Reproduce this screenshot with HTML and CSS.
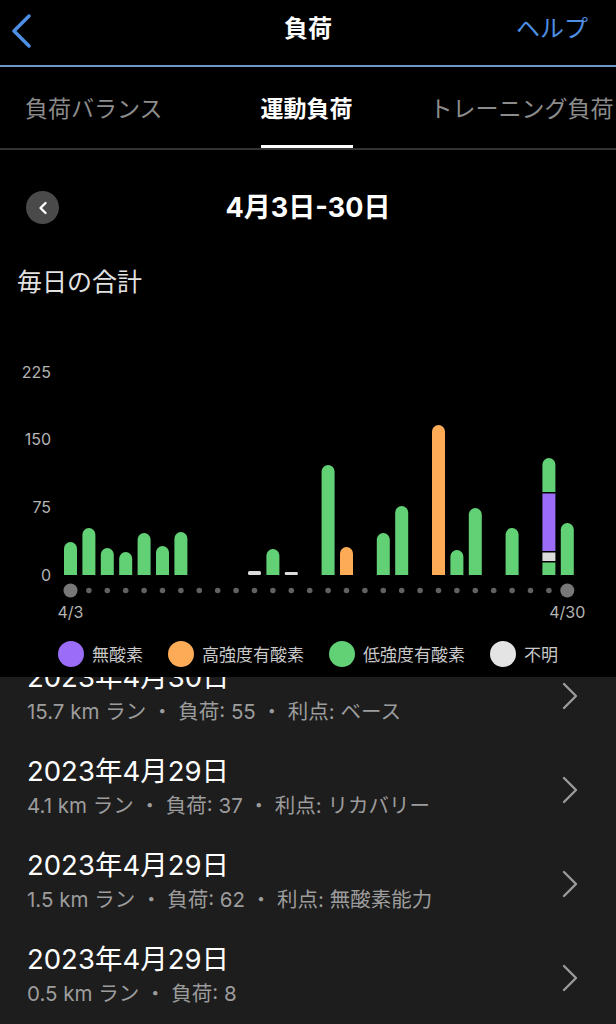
FILE: index.html
```html
<!DOCTYPE html>
<html lang="ja">
<head>
    <meta charset="utf-8">
    <title>負荷</title>
    <link rel="stylesheet" href="styles.css">
</head>
<body>
    <div class="topbar">
        <a class="back"><svg width="20" height="34" viewBox="0 0 20 34"><polyline points="17,2 2,17 17,32"/></svg></a>
        <div class="title">負荷</div>
        <a class="help">ヘルプ</a>
    </div>

    <div class="tabs">
        <span class="tab first">負荷バランス</span>
        <span class="tab second active">運動負荷</span>
        <span class="tab third">トレーニング負荷</span>
    </div>

    <div class="panel">
        <div class="range">
            <span class="prev"><svg width="10" height="14" viewBox="0 0 10 14"><polyline points="7.5,2 2.5,7 7.5,12"/></svg></span>
            <span class="range-title">4月3日-30日</span>
        </div>
        <div class="caption">毎日の合計</div>

        <svg class="chart" width="616" height="331" viewBox="0 299 616 331">
            <g class="ylabels">
                <text x="51" y="378">225</text>
                <text x="51" y="445">150</text>
                <text x="51" y="513">75</text>
                <text x="51" y="581">0</text>
            </g>
            <g class="green">
                <path d="M64 575V548.5A6.5 6.5 0 0 1 77 548.5V575Z"/>
                <path d="M82.4 575V534.5A6.5 6.5 0 0 1 95.4 534.5V575Z"/>
                <path d="M100.8 575V554.5A6.5 6.5 0 0 1 113.8 554.5V575Z"/>
                <path d="M119.2 575V558.5A6.5 6.5 0 0 1 132.2 558.5V575Z"/>
                <path d="M137.6 575V539.5A6.5 6.5 0 0 1 150.6 539.5V575Z"/>
                <path d="M156 575V552.5A6.5 6.5 0 0 1 169 552.5V575Z"/>
                <path d="M174.4 575V538.5A6.5 6.5 0 0 1 187.4 538.5V575Z"/>
                <path d="M266.4 575V555.5A6.5 6.5 0 0 1 279.4 555.5V575Z"/>
                <path d="M321.6 575V471.5A6.5 6.5 0 0 1 334.6 471.5V575Z"/>
                <path d="M376.8 575V539.5A6.5 6.5 0 0 1 389.8 539.5V575Z"/>
                <path d="M395.2 575V512.5A6.5 6.5 0 0 1 408.2 512.5V575Z"/>
                <path d="M450.4 575V556.5A6.5 6.5 0 0 1 463.4 556.5V575Z"/>
                <path d="M468.8 575V514.5A6.5 6.5 0 0 1 481.8 514.5V575Z"/>
                <path d="M505.6 575V534.5A6.5 6.5 0 0 1 518.6 534.5V575Z"/>
                <path d="M560.8 575V529.5A6.5 6.5 0 0 1 573.8 529.5V575Z"/>
                <path d="M542.4 492V464.5A6.5 6.5 0 0 1 555.4 464.5V492Z"/>
                <rect x="542.4" y="562.5" width="13" height="12.5"/>
            </g>
            <g class="orange">
                <path d="M340 575V553.5A6.5 6.5 0 0 1 353 553.5V575Z"/>
                <path d="M432 575V431.5A6.5 6.5 0 0 1 445 431.5V575Z"/>
            </g>
            <rect class="purple" x="542.4" y="493.5" width="13" height="57.5"/>
            <g class="white">
                <rect x="542.4" y="552.5" width="13" height="8.5"/>
                <rect x="248" y="571" width="13" height="4" rx="1.5"/>
                <rect x="284.8" y="572" width="13" height="3" rx="1"/>
            </g>
            <line class="dots" x1="88.9" y1="590.5" x2="548.9" y2="590.5"/>
            <circle class="end" cx="70.5" cy="590.5" r="7"/>
            <circle class="end" cx="567.3" cy="590.5" r="7"/>
            <g class="xlabels">
                <text x="70.5" y="618">4/3</text>
                <text x="567.3" y="618">4/30</text>
            </g>
        </svg>

        <div class="legend">
            <span class="key"><i class="dot purple-dot"></i>無酸素</span>
            <span class="key"><i class="dot orange-dot"></i>高強度有酸素</span>
            <span class="key"><i class="dot green-dot"></i>低強度有酸素</span>
            <span class="key"><i class="dot white-dot"></i>不明</span>
        </div>
    </div>

    <div class="list">
        <a class="item">
            <div class="text">
                <div class="date">2023年4月30日</div>
                <div class="info">15.7 km ラン ・ 負荷: 55 ・ 利点: ベース</div>
            </div>
            <svg class="chev" width="16" height="28" viewBox="0 0 16 28"><polyline points="2,2 14,14 2,26"/></svg>
        </a>
        <a class="item">
            <div class="text">
                <div class="date">2023年4月29日</div>
                <div class="info">4.1 km ラン ・ 負荷: 37 ・ 利点: リカバリー</div>
            </div>
            <svg class="chev" width="16" height="28" viewBox="0 0 16 28"><polyline points="2,2 14,14 2,26"/></svg>
        </a>
        <a class="item">
            <div class="text">
                <div class="date">2023年4月29日</div>
                <div class="info">1.5 km ラン ・ 負荷: 62 ・ 利点: 無酸素能力</div>
            </div>
            <svg class="chev" width="16" height="28" viewBox="0 0 16 28"><polyline points="2,2 14,14 2,26"/></svg>
        </a>
        <a class="item">
            <div class="text">
                <div class="date">2023年4月29日</div>
                <div class="info">0.5 km ラン ・ 負荷: 8</div>
            </div>
            <svg class="chev" width="16" height="28" viewBox="0 0 16 28"><polyline points="2,2 14,14 2,26"/></svg>
        </a>
    </div>
</body>
</html>
```

FILE: styles.css
```css
html, body {
    margin: 0;
    padding: 0;
    width: 616px;
    height: 1024px;
    overflow: hidden;
    background-color: #1d1d1d;
    color: #fff;
    font-family: "Inter", "Noto Sans CJK JP", sans-serif;
}

.topbar {
    height: 65px;
    background-color: #000;
    border-bottom: 2px solid #6d94cb;
    display: grid;
    grid-template-columns: 1fr auto 1fr;
    align-items: center;
} .back {
    padding-left: 12px;
    padding-bottom: 4px;
    display: flex;
} .back polyline {
    fill: none;
    stroke: #4d8fe4;
    stroke-width: 3.5;
    stroke-linecap: round;
    stroke-linejoin: round;
} .title {
    font-size: 24px;
    font-weight: bold;
    line-height: 30px;
    padding-bottom: 8px;
} .help {
    justify-self: end;
    padding-right: 28px;
    padding-bottom: 8px;
    font-size: 24px;
    line-height: 30px;
    color: #4d8fe4;
}

.tabs {
    background-color: #000;
    border-bottom: 2px solid #333;
    display: flex;
    white-space: nowrap;
    overflow: hidden;
    box-sizing: border-box;
    height: 83px;
} .tab {
    display: flex;
    align-items: center;
    padding-top: 1px;
    border-bottom: 3px solid transparent;
    font-size: 23px;
    color: #8c8c8c;
} .tab.first {
    margin-left: 25px;
} .tab.second {
    margin-left: 98px;
} .tab.third {
    margin-left: 77px;
} .tab.active {
    color: #fff;
    font-weight: bold;
    border-bottom-color: #fff;
}

.panel {
    background-color: #000;
    height: 527px;
} .range {
    padding-top: 41px;
    height: 33px;
    display: grid;
    grid-template-columns: 1fr auto 1fr;
    align-items: center;
} .prev {
    margin-left: 26px;
    width: 33px;
    height: 33px;
    border-radius: 50%;
    background-color: #4a4a4a;
    display: flex;
    align-items: center;
    justify-content: center;
} .prev polyline {
    fill: none;
    stroke: #fff;
    stroke-width: 2.4;
    stroke-linecap: round;
    stroke-linejoin: round;
} .range-title {
    font-size: 27px;
    font-weight: bold;
    line-height: 33px;
} .caption {
    margin-top: 41px;
    padding-left: 17px;
    font-size: 25px;
    line-height: 34px;
    color: #e2e2e2;
}

.chart {
    display: block;
} .chart text {
    font-family: "Inter", "Noto Sans CJK JP", sans-serif;
    font-size: 16px;
    fill: #b4b4b4;
} .ylabels text {
    text-anchor: end;
} .xlabels text {
    text-anchor: middle;
} .green {
    fill: #62d176;
} .orange {
    fill: #fdab57;
} .purple {
    fill: #9a6cf7;
} .white {
    fill: #dcdcdc;
} .dots {
    stroke: #616161;
    stroke-width: 5.6;
    stroke-linecap: round;
    stroke-dasharray: 0 18.4;
} .end {
    fill: #787878;
}

.legend {
    height: 47px;
    display: flex;
    align-items: center;
    justify-content: center;
    gap: 25px;
} .key {
    display: flex;
    align-items: center;
    gap: 8px;
    font-size: 17px;
    color: #c8c8c8;
} .dot {
    width: 26px;
    height: 26px;
    border-radius: 50%;
} .purple-dot {
    background-color: #9a6cf7;
} .orange-dot {
    background-color: #fdab57;
} .green-dot {
    background-color: #62d176;
} .white-dot {
    background-color: #e4e4e4;
}

.list {
    overflow: hidden;
} .item {
    height: 94px;
    box-sizing: border-box;
    padding: 18px 38px 0 27px;
    display: flex;
    align-items: flex-start;
    justify-content: space-between;
} .item:first-child {
    margin-top: -35px;
} .date {
    font-size: 27.5px;
    line-height: 35px;
} .info {
    margin-top: 4px;
    font-size: 20.5px;
    line-height: 26px;
    color: #9c9c9c;
} .chev {
    margin-top: 22px;
} .chev polyline {
    fill: none;
    stroke: #9a9a9a;
    stroke-width: 2.4;
    stroke-linecap: round;
    stroke-linejoin: round;
}
```
